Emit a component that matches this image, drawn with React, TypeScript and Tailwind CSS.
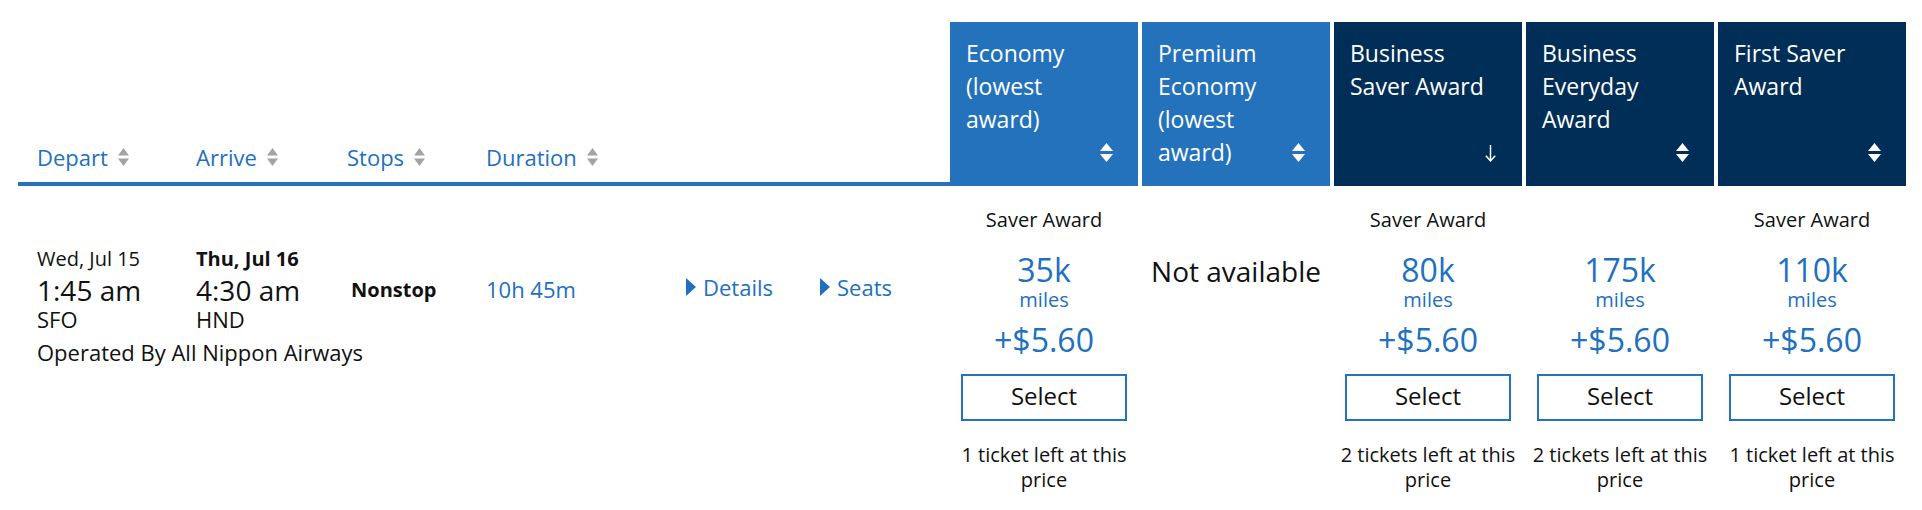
const blue = "text-[#2170bf]";

type Fare = {
  title: string;
  dark: boolean;
  sorted?: boolean;
  label?: string;
  miles?: string;
  tickets?: string;
};

const fares: Fare[] = [
  { title: "Economy (lowest award)", dark: false, label: "Saver Award", miles: "35k", tickets: "1 ticket left at this price" },
  { title: "Premium Economy (lowest award)", dark: false },
  { title: "Business Saver Award", dark: true, sorted: true, label: "Saver Award", miles: "80k", tickets: "2 tickets left at this price" },
  { title: "Business Everyday Award", dark: true, miles: "175k", tickets: "2 tickets left at this price" },
  { title: "First Saver Award", dark: true, label: "Saver Award", miles: "110k", tickets: "1 ticket left at this price" },
];

function SortIcon({ color, w, h }: { color: string; w: number; h: number }) {
  const half = h / 2;
  return (
    <svg width={w} height={h} viewBox={`0 0 ${w} ${h}`} fill={color}>
      <polygon points={`0,${half - 1.5} ${w / 2},0 ${w},${half - 1.5}`} />
      <polygon points={`0,${half + 1.5} ${w / 2},${h} ${w},${half + 1.5}`} />
    </svg>
  );
}

function Caret() {
  return (
    <svg width="10" height="18" viewBox="0 0 10 18" fill="#2170bf">
      <polygon points="0,0 10,9 0,18" />
    </svg>
  );
}

function HeaderCell({ fare, first }: { fare: Fare; first: boolean }) {
  return (
    <div
      className={`grid h-[164px] w-[188px] text-white ${fare.dark ? "bg-[#002e57]" : "bg-[#2472bb]"} ${first ? "" : "ml-[4px]"}`}
    >
      <div className="col-start-1 row-start-1 pl-4 pr-6 pt-[15px] text-[23px] leading-[33px]">{fare.title}</div>
      {fare.sorted ? (
        <div className="col-start-1 row-start-1 mb-[24px] mr-[26px] self-end justify-self-end">
          <svg width="11" height="17" viewBox="0 0 11 17" fill="none" stroke="white" strokeWidth="1.5">
            <line x1="5.5" y1="0" x2="5.5" y2="16" />
            <polyline points="0.8,10.8 5.5,15.8 10.2,10.8" />
          </svg>
        </div>
      ) : (
        <div className="col-start-1 row-start-1 mb-[24px] mr-[25px] self-end justify-self-end">
          <SortIcon color="white" w={13} h={19} />
        </div>
      )}
    </div>
  );
}

function FareCell({ fare, first }: { fare: Fare; first: boolean }) {
  return (
    <div className={`flex w-[188px] flex-col items-center pt-[21px] text-center text-[#111] ${first ? "" : "ml-[4px]"}`}>
      <div className="h-[26px] text-[20px] leading-[26px]">{fare.label ?? ""}</div>
      {fare.miles ? (
        <>
          <div className={`mt-[17px] text-[32px] leading-[39px] ${blue}`}>{fare.miles}</div>
          <div className={`text-[20px] leading-[22px] ${blue}`}>miles</div>
          <div className={`mt-[9px] text-[32px] leading-[40px] ${blue}`}>+$5.60</div>
          <button className="mt-[14px] flex h-[47px] w-[166px] items-center justify-center border-2 border-[#2472bb] bg-white pb-[4px] text-[24px] text-[#111]">
            Select
          </button>
          <div className="mt-[21px] w-full px-[6px] text-[20px] leading-[25px]">{fare.tickets}</div>
        </>
      ) : (
        <div className="mt-[20px] text-[28px] leading-[36px]">Not available</div>
      )}
    </div>
  );
}

export default function App() {
  const heads = [
    { name: "Depart", w: "w-[159px]" },
    { name: "Arrive", w: "w-[151px]" },
    { name: "Stops", w: "w-[139px]" },
    { name: "Duration", w: "" },
  ];

  return (
    <div className="h-[510px] bg-white pl-[18px] pt-[22px] font-['Open_Sans',sans-serif]">
      <div className="flex">
        <div className="flex h-[164px] w-[932px] items-end border-b-4 border-[#2472bb] pb-[10px] pl-[19px]">
          {heads.map((h) => (
            <div key={h.name} className={`flex items-center ${h.w}`}>
              <span className={`text-[22px] leading-[30px] ${blue}`}>{h.name}</span>
              <span className="ml-[10px]">
                <SortIcon color="#a3a3a3" w={11} h={18} />
              </span>
            </div>
          ))}
        </div>
        {fares.map((f, i) => (
          <HeaderCell key={f.title} fare={f} first={i === 0} />
        ))}
      </div>

      <div className="flex">
        <div className="w-[932px] pl-[19px] pt-[60px] text-[#111]">
          <div className="flex items-start">
            <div className="w-[159px]">
              <div className="text-[20px] leading-[26px]">Wed, Jul 15</div>
              <div className="text-[28px] leading-[36px]">1:45 am</div>
              <div className="text-[22px] leading-[23px]">SFO</div>
            </div>
            <div className="w-[155px]">
              <div className="text-[20px] font-bold leading-[26px]">Thu, Jul 16</div>
              <div className="text-[28px] leading-[36px]">4:30 am</div>
              <div className="text-[22px] leading-[23px]">HND</div>
            </div>
            <div className="mt-[31px] w-[135px] text-[20px] font-bold leading-[26px]">Nonstop</div>
            <div className={`mt-[28px] w-[200px] text-[22px] leading-[30px] ${blue}`}>10h 45m</div>
            <a className="mt-[26px] flex w-[134px] items-center" href="#details">
              <Caret />
              <span className={`ml-[7px] text-[22px] leading-[30px] ${blue}`}>Details</span>
            </a>
            <a className="mt-[26px] flex items-center" href="#seats">
              <Caret />
              <span className={`ml-[7px] text-[22px] leading-[30px] ${blue}`}>Seats</span>
            </a>
          </div>
          <div className="mt-[6px] text-[22px] leading-[30px]">Operated By All Nippon Airways</div>
        </div>
        {fares.map((f, i) => (
          <FareCell key={f.title} fare={f} first={i === 0} />
        ))}
      </div>
    </div>
  );
}
